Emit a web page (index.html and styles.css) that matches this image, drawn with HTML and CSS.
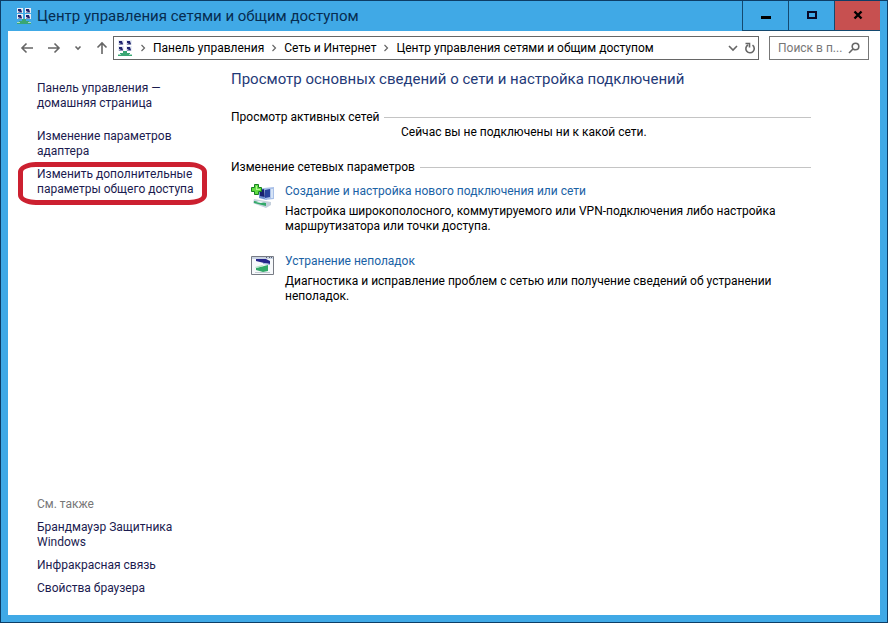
FILE: index.html
```
<!DOCTYPE html>
<html lang="ru">
<head>
  <meta charset="UTF-8">
  <meta name="viewport" content="width=device-width, initial-scale=1.0">
  <title>Центр управления сетями и общим доступом</title>
  <link rel="stylesheet" href="styles.css">
</head>

<body>
  <svg class="sprite" width="0" height="0" aria-hidden="true">
    <symbol id="network" viewBox="0 0 16 16">
      <path fill="#e8edf5" d="M1 0h6v5H1zM9 0h6v5H9zM1 6h6v5H1zM9 6h6v5H9z"/>
      <path fill="#20236e" d="M2 1h3l1 3H4L2 3zM10 1h3l1 3h-2l-2-1zM2 7h3l1 3H4L2 9zM10 7h3l1 3h-2l-2-1z"/>
      <path fill="#8d93b5" d="M2 4h4v1H2zM10 4h4v1h-4zM2 10h4v1H2zM10 10h4v1h-4z"/>
      <path fill="#3aa673" d="M6 11h4v2h3v1h2v2H1v-2h2v-1h3z"/>
      <path fill="#a9dcc4" d="M1 14h3v1H1zM12 14h3v1h-3z"/>
    </symbol>
  </svg>

  <div class="window">
    <header class="titlebar">
      <svg class="app-icon" viewBox="0 0 16 16"><use href="#network"/></svg>
      <h1 class="title">Центр управления сетями и общим доступом</h1>
      <div class="window-buttons">
        <button class="window-button" type="button" aria-label="Свернуть">
          <svg width="12" height="12" viewBox="0 0 12 12"><path fill="#000" d="M1 6h10v3H1z"/></svg>
        </button>
        <button class="window-button" type="button" aria-label="Развернуть">
          <svg width="12" height="12" viewBox="0 0 12 12"><path fill="none" stroke="#0a0a28" stroke-width="2" d="M2 2h8v6H2z"/></svg>
        </button>
        <button class="window-button close" type="button" aria-label="Закрыть">
          <svg width="12" height="12" viewBox="0 0 12 12"><path fill="none" stroke="#000" stroke-width="2.4" d="M2.500 1.500l7 7M9.500 1.500l-7 7"/></svg>
        </button>
      </div>
    </header>

    <div class="content">
      <div class="toolbar">
        <div class="nav">
          <button class="nav-button" type="button" aria-label="Назад">
            <svg width="14" height="14" viewBox="0 0 14 14"><path d="M13 7H2M6.500 2.500L2 7l4.500 4.500"/></svg>
          </button>
          <button class="nav-button" type="button" aria-label="Вперед">
            <svg width="14" height="14" viewBox="0 0 14 14"><path d="M1 7h11M7.500 2.500L12 7l-4.500 4.500"/></svg>
          </button>
          <button class="nav-button" type="button" aria-label="Последние расположения">
            <svg width="8" height="8" viewBox="0 0 8 8"><path d="M1.500 2.500L4 5l2.500-2.500"/></svg>
          </button>
          <button class="nav-button" type="button" aria-label="Вверх">
            <svg width="14" height="14" viewBox="0 0 14 14"><path d="M7 13V2M2.500 6.500L7 2l4.500 4.500"/></svg>
          </button>
        </div>
        <nav class="address">
          <svg class="app-icon" viewBox="0 0 16 16"><use href="#network"/></svg>
          <svg class="separator" viewBox="0 0 8 8"><path d="M2.500 1L5.500 4l-3 3"/></svg>
          <a class="crumb" href="#">Панель управления</a>
          <svg class="separator" viewBox="0 0 8 8"><path d="M2.500 1L5.500 4l-3 3"/></svg>
          <a class="crumb" href="#">Сеть и Интернет</a>
          <svg class="separator" viewBox="0 0 8 8"><path d="M2.500 1L5.500 4l-3 3"/></svg>
          <a class="crumb" href="#">Центр управления сетями и общим доступом</a>
          <div class="address-buttons">
            <button class="nav-button" type="button" aria-label="Предыдущие расположения">
              <svg width="10" height="10" viewBox="0 0 10 10"><path d="M1 3l4 4 4-4"/></svg>
            </button>
            <button class="nav-button" type="button" aria-label="Обновить">
              <svg width="12" height="12" viewBox="0 0 12 12"><path d="M8.500 3.200a4.200 4.200 0 1 1-4.600-.2M1.500 1.500h4v4"/></svg>
            </button>
          </div>
        </nav>
        <div class="search">
          <input class="search-input" type="text" placeholder="Поиск в п..." aria-label="Поиск в панели управления">
          <svg width="12" height="12" viewBox="0 0 12 12"><circle cx="7.500" cy="4.500" r="3.300"/><path d="M5.200 6.800L1 11"/></svg>
        </div>
      </div>

      <div class="columns">
        <aside class="sidebar">
          <a class="side-link home" href="#">Панель управления — домашняя страница</a>
          <a class="side-link" href="#">Изменение параметров адаптера</a>
          <a class="side-link marked" href="#">Изменить дополнительные параметры общего доступа</a>

          <div class="see-also">
            <h2 class="see-also-title">См. также</h2>
            <a class="side-link" href="#">Брандмауэр Защитника Windows</a>
            <a class="side-link" href="#">Инфракрасная связь</a>
            <a class="side-link" href="#">Свойства браузера</a>
          </div>
        </aside>

        <main class="main">
          <h2 class="heading">Просмотр основных сведений о сети и настройка подключений</h2>

          <section class="group">
            <h3 class="group-title">Просмотр активных сетей</h3>
            <p class="status">Сейчас вы не подключены ни к какой сети.</p>
          </section>

          <section class="group">
            <h3 class="group-title">Изменение сетевых параметров</h3>
            <div class="task">
              <svg class="task-icon" viewBox="0 0 24 24">
                <path fill="#6d8fd0" d="M8 5l8-1v12l-8-2z"/>
                <path fill="#17206f" d="M9 6l5-1v8l-5-1z"/>
                <path fill="#a9c0e8" d="M13 4l10-1v12l-9 1z"/>
                <path fill="#28439c" d="M14 6l5-1v8l-5 1z"/>
                <path fill="#d6e4f6" d="M20 5h2v9h-2z"/>
                <path fill="#c5d0dc" d="M3 15l17 3v3l-5 3-13-5z"/>
                <path fill="#32a968" d="M3 17l12 2v3L3 19z"/>
                <path fill="#f4f8fb" d="M8 17l5 1-3 1-5-1z"/>
                <path fill="#62dc43" stroke="#168121" d="M3.500.500h4v3h3v4h-3v3h-4v-3h-3v-4h3z"/>
                <path fill="#b4f598" d="M5 2h1v3h3v1H5z"/>
              </svg>
              <div class="task-text">
                <a class="task-link" href="#">Создание и настройка нового подключения или сети</a>
                <p class="task-info">Настройка широкополосного, коммутируемого или VPN-подключения либо настройка маршрутизатора или точки доступа.</p>
              </div>
            </div>
            <div class="task">
              <svg class="task-icon" viewBox="0 0 24 24">
                <path fill="#f7f9fb" stroke="#777b84" d="M.500 2.500h22v18H.500z"/>
                <path fill="#c9d3e2" d="M1 3h21v2H1z"/>
                <path fill="#596078" d="M15 3h1v1h-1zM18 3h1v1h-1zM20 3h1v1h-1z"/>
                <path fill="#26268c" d="M5 5h10l4 2v3l-6-1-8-2z"/>
                <path fill="#9bb4dc" d="M12 9l7 1v1l-7-1z"/>
                <path fill="#32a968" d="M5 14l8-2 4-1v6l-5 1-7-2z"/>
                <path fill="#b9e5cb" d="M4 13l7-2 2 1-8 2z"/>
                <path fill="#c5ccd5" d="M4 18h15v1H4z"/>
              </svg>
              <div class="task-text">
                <a class="task-link" href="#">Устранение неполадок</a>
                <p class="task-info">Диагностика и исправление проблем с сетью или получение сведений об устранении неполадок.</p>
              </div>
            </div>
          </section>
        </main>
      </div>
    </div>
  </div>
</body>
</html>
```
FILE: styles.css
```
* {
  box-sizing: border-box;
}

body {
  margin: 0;
  font-family: Roboto, "Noto Sans", sans-serif;
  font-size: 12px;
  line-height: 15px;
  color: #000;
}

h1, h2, h3, p {
  margin: 0;
  font-weight: normal;
}

a {
  text-decoration: none;
}

button {
  padding: 0;
  border: none;
  background: none;
}

.sprite {
  position: absolute;
}

.window {
  display: flex;
  flex-direction: column;
  min-height: 100vh;
  padding: 0 7px 7px;
  border: 1px solid #0d3d66;
  background-color: #40a9e6;
}

/* title bar */
.titlebar {
  display: flex;
  align-items: center;
  height: 30px;
  padding-left: 8px;
}

.app-icon {
  flex: none;
  width: 16px;
  height: 16px;
}

.title {
  flex: 1;
  padding-left: 5px;
  font-size: 15px;
  line-height: 20px;
  color: #062c50;
}

.window-buttons {
  display: flex;
  align-self: stretch;
}

.window-button {
  display: flex;
  align-items: center;
  justify-content: center;
  width: 46px;
  border-left: 1px solid #14496f;
  border-bottom: 1px solid #14496f;
}

.window-button.close {
  background-color: #c75050;
}

.content {
  flex: 1;
  display: flex;
  flex-direction: column;
  background-color: #fff;
}

/* toolbar */
.toolbar {
  display: flex;
  align-items: center;
  padding: 5px 11px 0 12px;
}

.toolbar svg {
  flex: none;
}

.nav {
  display: flex;
  align-items: center;
  gap: 13px;
  padding-right: 4px;
}

.nav-button {
  display: flex;
}

.nav-button svg, .search svg, .separator {
  fill: none;
  stroke: #666;
  stroke-width: 1.6;
}

.address {
  flex: 1;
  display: flex;
  align-items: center;
  height: 24px;
  padding: 0 2px 0 3px;
  border: 1px solid #666;
}

.separator {
  width: 8px;
  height: 8px;
  margin: 0 6px;
  stroke-width: 1.2;
}

.crumb {
  color: #000;
  white-space: nowrap;
}

.address-buttons {
  display: flex;
  align-items: center;
  gap: 6px;
  margin-left: auto;
}

.search {
  display: flex;
  align-items: center;
  width: 100px;
  height: 24px;
  margin-left: 10px;
  padding: 0 8px;
  border: 1px solid #777;
}

.search-input {
  flex: 1;
  min-width: 0;
  padding: 0;
  border: none;
  outline: none;
  font: inherit;
}

.search-input::placeholder {
  color: #777;
}

/* page */
.columns {
  flex: 1;
  display: flex;
}

.sidebar {
  display: flex;
  flex-direction: column;
  align-items: flex-start;
  width: 223px;
  padding: 21px 24px 19px 29px;
}

.side-link {
  max-width: 160px;
  margin-bottom: 8px;
  color: #1b1b4f;
}

.side-link.home {
  max-width: 140px;
  margin-bottom: 18px;
}

.marked {
  position: relative;
}

/* red frame around the link */
.marked::after {
  content: '';
  position: absolute;
  inset: -5px -10px -8px -19px;
  border: 5px solid #cc2030;
  border-radius: 18px / 10px;
}

.see-also {
  display: flex;
  flex-direction: column;
  margin-top: auto;
}

.see-also .side-link:last-child {
  margin-bottom: 0;
}

.see-also-title {
  margin-bottom: 8px;
  font-size: 12px;
  color: #777;
}

.main {
  flex: 1;
  padding: 8px 69px 20px 0;
}

.heading {
  font-size: 15px;
  line-height: 22px;
  color: #1f3a78;
}

.group {
  margin-top: 20px;
}

.group-title {
  display: flex;
  align-items: center;
  gap: 5px;
  font-size: 12px;
}

.group-title::after {
  content: '';
  flex: 1;
  height: 1px;
  background-color: #c4c4c4;
}

.status {
  padding-left: 170px;
}

.task {
  display: flex;
  gap: 10px;
  margin-top: 9px;
  padding-left: 20px;
}

.task + .task {
  margin-top: 20px;
}

.task-icon {
  flex: none;
  width: 24px;
  height: 24px;
}

.task-link {
  color: #1a62a5;
}

.task-info {
  margin-top: 5px;
}
```
